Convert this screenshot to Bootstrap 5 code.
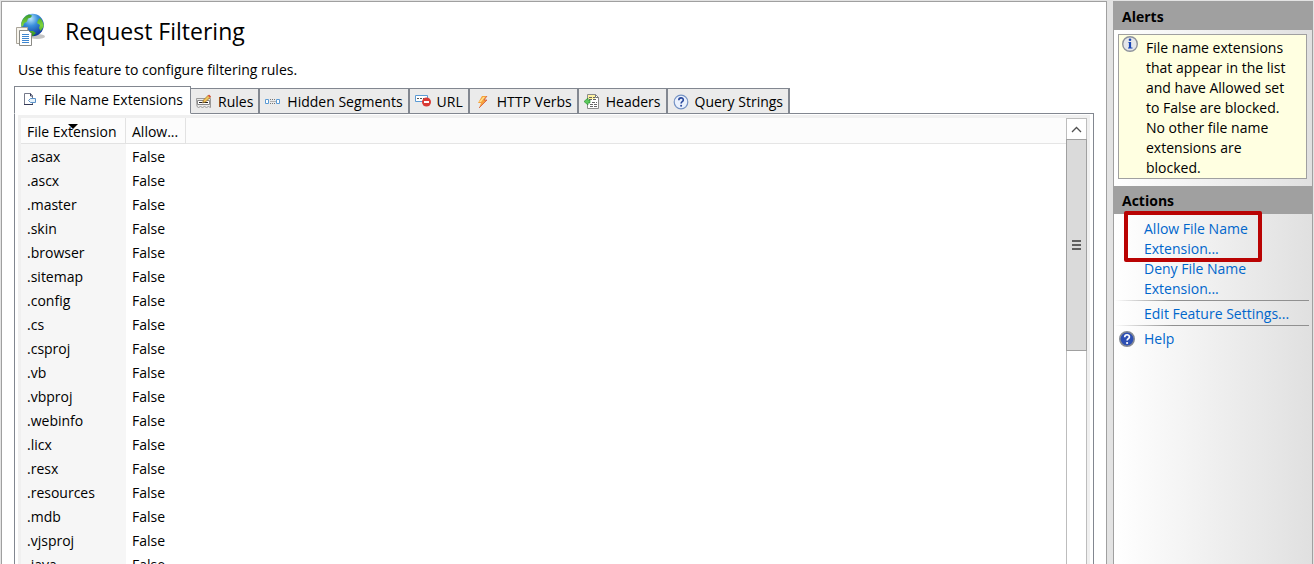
<!DOCTYPE html>
<html lang="en">
<head>
<meta charset="utf-8">
<meta name="viewport" content="width=device-width, initial-scale=1">
<title>Request Filtering</title>
<link href="https://cdn.jsdelivr.net/npm/bootstrap@5.3.0/dist/css/bootstrap.min.css" rel="stylesheet">
<style>
  body { font-family: "Open Sans", "Noto Sans", sans-serif; font-size: 14px; line-height: 20px; color: #000; background: #e3e3e3; }
  h1 { font-size: 23px; line-height: 32px; font-weight: 400; }
  svg { display: block; flex: none; }
  .app-shell { padding: 1px 0 0 1px; }
  .feature-pane { background: #fff; border: 1px solid #a0a0a0; border-bottom: 0; padding: 10px 12px 0 12px; min-width: 0; }
  .feature-head { gap: 17px; }
  .intro { padding: 10px 0 6px 4px; }

  .feature-tabs { border: 0; align-items: flex-end; }
  .feature-tabs .nav-item { display: flex; margin-left: -1px; }
  .feature-tabs .nav-link { display: flex; align-items: center; gap: 6px; height: 26px; margin: 0 0 -1px; padding: 1px 5px 0; border: 1px solid #828790; border-radius: 0; background: #ebebeb; color: #000; white-space: nowrap; }
  .feature-tabs .nav-item:first-child { margin-left: 0; }
  .feature-tabs .nav-link.active { height: 28px; padding: 0 7px; background: #fff; color: #000; border-color: #828790 #828790 #fff; z-index: 1; position: relative; }
  .feature-tabs .nav-item + .nav-item { border-right: 1px solid #828790; }

  .tab-panel { border: 1px solid #828790; border-bottom: 0; padding: 1px 3px 0; min-height: 0; }
  .list-frame { border: 3px solid #f0f0f0; border-bottom: 0; min-height: 0; overflow: hidden; }
  .list-view { background: linear-gradient(#fcfcfc 25px, #e5e5e5 25px 26px, #fff 26px); overflow: hidden; }
  .ext-table { border-collapse: separate; border-spacing: 0; table-layout: fixed; width: 165px; }
  .ext-table th { position: relative; height: 26px; padding: 2px 0 0 6px; font-weight: 400; border-right: 1px solid #e2e2e2; border-bottom: 1px solid #e2e2e2; white-space: nowrap; }
  .ext-table td { height: 24px; padding: 3px 6px 1px; }
  .ext-table td:first-child { background: #f6f6f6; }
  .col-ext { width: 105px; }
  .sort-mark { position: absolute; left: 47px; top: 6px; }
  .scroll-rail { width: 21px; flex: none; border: solid #bdbdbd; border-width: 0 1px; background: #fff; }
  .scroll-up { display: flex; align-items: center; justify-content: center; height: 21px; padding: 0; border: 0; border-top: 1px solid #bdbdbd; background: #fff; }
  .scroll-thumb { height: 212px; margin: 0 -1px; background: #dadada; border: 1px solid #a0a0a0; display: flex; align-items: center; justify-content: center; }

  .side-pane { width: 200px; flex: none; margin: 0 1px 0 6px; border: solid #a0a0a0; border-width: 1px 1px 0; background: linear-gradient(90deg, #fff, #e0e0e0); }
  .side-title { margin: 0; background: #a0a0a0; font-size: 14px; line-height: 20px; font-weight: 700; padding: 5px 8px 3px; }
  .notice { margin: 4px 5px 7px 4px; padding: 3px 8px 0 3px; gap: 8px; background: #ffffe1; border: 1px solid #a0a0a0; border-radius: 0; color: #000; }
  .notice svg { margin-top: -4px; }
  .action-list { padding-top: 5px; }
  .action-list a { display: block; padding-left: 30px; color: #0066cc; text-decoration: none; }
  .action-list .help-link { display: flex; gap: 9px; padding-left: 5px; }
  .rule-line { height: 1px; margin: 1px 3px 3px 0; background: linear-gradient(90deg, transparent, #909090 30%); }
  .callout-box { position: absolute; left: 10px; top: -3px; width: 138px; height: 51px; border: 4px solid #b90303; border-radius: 2px; pointer-events: none; }
</style>
</head>
<body>
<div class="app-shell d-flex vh-100 overflow-hidden">
  <main class="feature-pane d-flex flex-column flex-grow-1">
    <header class="feature-head d-flex align-items-center">
      <svg width="34" height="38" viewBox="1 0 34 38">
        <defs>
          <radialGradient id="sea" cx=".42" cy=".22" r=".8"><stop offset="0" stop-color="#b9e6fb"/><stop offset=".4" stop-color="#3a8fdc"/><stop offset="1" stop-color="#0c3399"/></radialGradient>
          <linearGradient id="land" x1="0" y1="0" x2="0" y2="1"><stop offset="0" stop-color="#3b9a2c"/><stop offset=".5" stop-color="#7fd63c"/><stop offset="1" stop-color="#2f8a22"/></linearGradient>
        </defs>
        <ellipse cx="24" cy="24.500" rx="8" ry="2.500" fill="#c4c4c4"/>
        <circle cx="19.500" cy="13" r="11.300" fill="url(#sea)"/>
        <path d="M9 9Q11 4 16 2.500l3 1-1 2-3 1-1 3-3 2-1 3-1.500 0Q7.500 12 9 9ZM27 6q4 4 3.500 9l-3 4-1.500-3 1-3-3-2 1-3zM16 19l4 0 3 2-3 3h-4z" fill="url(#land)"/>
        <path d="M3.500 15.500h11v16h-11z" fill="#f7f4ec" stroke="#aaa59a"/>
        <path d="M6.500 18.500h9l3 3v12h-12z" fill="#fff" stroke="#8b8b86"/>
        <path d="M9 22.500h7M9 24.500h7M9 26.500h7M9 28.500h7M9 30.500h7" stroke="#3e86d0"/>
      </svg>
      <h1 class="mb-0">Request Filtering</h1>
    </header>
    <p class="intro mb-0">Use this feature to configure filtering rules.</p>

    <ul class="nav nav-tabs feature-tabs flex-nowrap" role="tablist">
      <li class="nav-item" role="presentation"><button class="nav-link active" type="button" role="tab" aria-selected="true">
        <svg width="16" height="16" viewBox="0 0 16 16"><path d="M2.500 1.500h6l2 2v9h-8z" fill="#fff" stroke="#75798a"/><path d="M8.500 1.500v2.500h2" fill="none" stroke="#343a58"/><path d="M8.500 6.500h5v4h-5l-2-2z" fill="#e5f2fc" stroke="#5a91c8"/><path d="M2 12.500h9" stroke="#343a58"/></svg>
        File Name Extensions</button></li>
      <li class="nav-item" role="presentation"><button class="nav-link" type="button" role="tab">
        <svg width="16" height="16" viewBox="0 0 16 16"><path d="M.5 4.500h14v9l-2-1-2 1-2-1-2 1-2-1-2 1-1.500-1z" fill="#e9e9e9" stroke="#999"/><path d="M1.500 6.500h12v4h-12z" fill="#fff" stroke="#888"/><path d="M3 8.500h3M8 8.500h4" stroke="#222"/><path d="M6.500 9l1-3 5-5 2 2-5 5z" fill="#efc35a" stroke="#9b6b22" stroke-width=".7"/><path d="M12 2l1-1.500 2 2-1 1z" fill="#d94c3d"/><path d="M6.500 9l.5-1.500 1 1z" fill="#333"/></svg>
        Rules</button></li>
      <li class="nav-item" role="presentation"><button class="nav-link" type="button" role="tab">
        <svg width="16" height="16" viewBox="0 0 16 16"><path d="M.5 5.500h3v4h-3zM11.500 5.500h3v4h-3z" fill="#fff" stroke="#5b9bd5"/><path d="M5 5.500h6M5 9.500h6M5.500 7.500h5" stroke="#777" stroke-dasharray="1 1"/></svg>
        Hidden Segments</button></li>
      <li class="nav-item" role="presentation"><button class="nav-link" type="button" role="tab">
        <svg width="16" height="16" viewBox="0 0 16 16"><path d="M.5 1.500h12v6H.5z" fill="#fff" stroke="#5b9bd5"/><path d="M2 4.500h7" stroke="#555" stroke-dasharray="2 1"/><circle cx="11.500" cy="8" r="4.500" fill="#d93a35"/><path d="M9 8h5" stroke="#fff" stroke-width="2"/></svg>
        URL</button></li>
      <li class="nav-item" role="presentation"><button class="nav-link" type="button" role="tab">
        <svg width="16" height="16" viewBox="0 0 16 16"><path d="M7 2h5L9 6h3l-8 8 2-5H3z" fill="#f6a13c"/><path d="M8 3h2L6 8H4zM6 10l4-3" fill="#ffe18a"/><path d="M12 2L9 6h3l-8 8" fill="none" stroke="#d1543c" stroke-width=".8"/></svg>
        HTTP Verbs</button></li>
      <li class="nav-item" role="presentation"><button class="nav-link" type="button" role="tab">
        <svg width="16" height="16" viewBox="0 0 16 16"><path d="M3.500.5h8l3 3v11h-11z" fill="#fff" stroke="#8b8b8b"/><path d="M4 1h7v4H4z" fill="#fff3a0"/><path d="M11.500.5v3h3" fill="none" stroke="#777"/><path d="M5 3.500h6M5 5.500h8M8 8.500h5M6 10.500h7M6 12.500h7" stroke="#666" stroke-dasharray="3 1"/><path d="M0 7.500l4-3.500v2h2v3H4v2z" fill="#5cc95c" stroke="#258a2b" stroke-width=".6"/></svg>
        Headers</button></li>
      <li class="nav-item" role="presentation"><button class="nav-link" type="button" role="tab">
        <svg width="16" height="16" viewBox="0 0 16 16"><circle cx="8" cy="8" r="6.800" fill="#eaf1fd" stroke="#7492c4" stroke-width="1.200"/><path d="M5.800 6.300c0-3.300 4.600-3 4.500-.3 0 1.600-2.200 1.700-2.200 3.400" fill="none" stroke="#29489c" stroke-width="1.600"/><circle cx="8.100" cy="11.700" r="1" fill="#29489c"/></svg>
        Query Strings</button></li>
    </ul>

    <section class="tab-panel d-flex flex-column flex-grow-1">
      <div class="list-frame d-flex flex-grow-1">
        <div class="list-view flex-grow-1">
          <table class="ext-table">
            <thead><tr>
              <th class="col-ext" scope="col">File Extension<svg class="sort-mark" width="10" height="5" viewBox="0 0 10 5"><path d="M0 0h10L5 5z" fill="#000"/></svg></th>
              <th scope="col">Allow...</th>
            </tr></thead>
            <tbody>
              <tr><td>.asax</td><td>False</td></tr>
              <tr><td>.ascx</td><td>False</td></tr>
              <tr><td>.master</td><td>False</td></tr>
              <tr><td>.skin</td><td>False</td></tr>
              <tr><td>.browser</td><td>False</td></tr>
              <tr><td>.sitemap</td><td>False</td></tr>
              <tr><td>.config</td><td>False</td></tr>
              <tr><td>.cs</td><td>False</td></tr>
              <tr><td>.csproj</td><td>False</td></tr>
              <tr><td>.vb</td><td>False</td></tr>
              <tr><td>.vbproj</td><td>False</td></tr>
              <tr><td>.webinfo</td><td>False</td></tr>
              <tr><td>.licx</td><td>False</td></tr>
              <tr><td>.resx</td><td>False</td></tr>
              <tr><td>.resources</td><td>False</td></tr>
              <tr><td>.mdb</td><td>False</td></tr>
              <tr><td>.vjsproj</td><td>False</td></tr>
              <tr><td>.java</td><td>False</td></tr>
            </tbody>
          </table>
        </div>
        <div class="scroll-rail">
          <button class="scroll-up w-100" type="button" aria-label="Scroll up"><svg width="11" height="7" viewBox="0 0 11 7"><path d="M1 6l4.500-4.500L10 6" fill="none" stroke="#505050" stroke-width="1.300"/></svg></button>
          <div class="scroll-thumb"><svg width="9" height="10" viewBox="0 0 9 10"><path d="M0 1h9M0 5h9M0 9h9" stroke="#606060" stroke-width="2"/></svg></div>
        </div>
      </div>
    </section>
  </main>

  <aside class="side-pane">
    <h2 class="side-title">Alerts</h2>
    <div class="notice d-flex align-items-start">
      <svg width="16" height="20" viewBox="0 0 16 20"><circle cx="8" cy="10" r="7.300" fill="#e4e6ea" stroke="#8d929b" stroke-width="1.400"/><path d="M6.500 8.500h1.500v5M6 14h4.500" fill="none" stroke="#1745b5" stroke-width="1"/><path d="M8 8v6" stroke="#1745b5" stroke-width="2.200"/><circle cx="8" cy="5.800" r="1.300" fill="#1745b5"/></svg>
      <div>File name extensions that appear in the list and have Allowed set to False are blocked. No other file name extensions are blocked.</div>
    </div>
    <h2 class="side-title">Actions</h2>
    <nav class="action-list position-relative">
      <a href="#">Allow File Name<br>Extension...</a>
      <a href="#">Deny File Name<br>Extension...</a>
      <div class="rule-line"></div>
      <a href="#">Edit Feature Settings...</a>
      <div class="rule-line"></div>
      <a href="#" class="help-link"><svg width="16" height="20" viewBox="0 0 16 20"><circle cx="8" cy="10" r="7.200" fill="#2c4fb4" stroke="#858a94" stroke-width="1.600"/><path d="M5.700 8.300c0-3.500 4.800-3.200 4.700-.3 0 1.700-2.300 1.700-2.300 3.600" fill="none" stroke="#fff" stroke-width="1.700"/><circle cx="8.100" cy="14" r="1.100" fill="#fff"/></svg>Help</a>
      <span class="callout-box"></span>
    </nav>
  </aside>
</div>
<script src="https://cdn.jsdelivr.net/npm/bootstrap@5.3.0/dist/js/bootstrap.bundle.min.js"></script>
</body>
</html>
